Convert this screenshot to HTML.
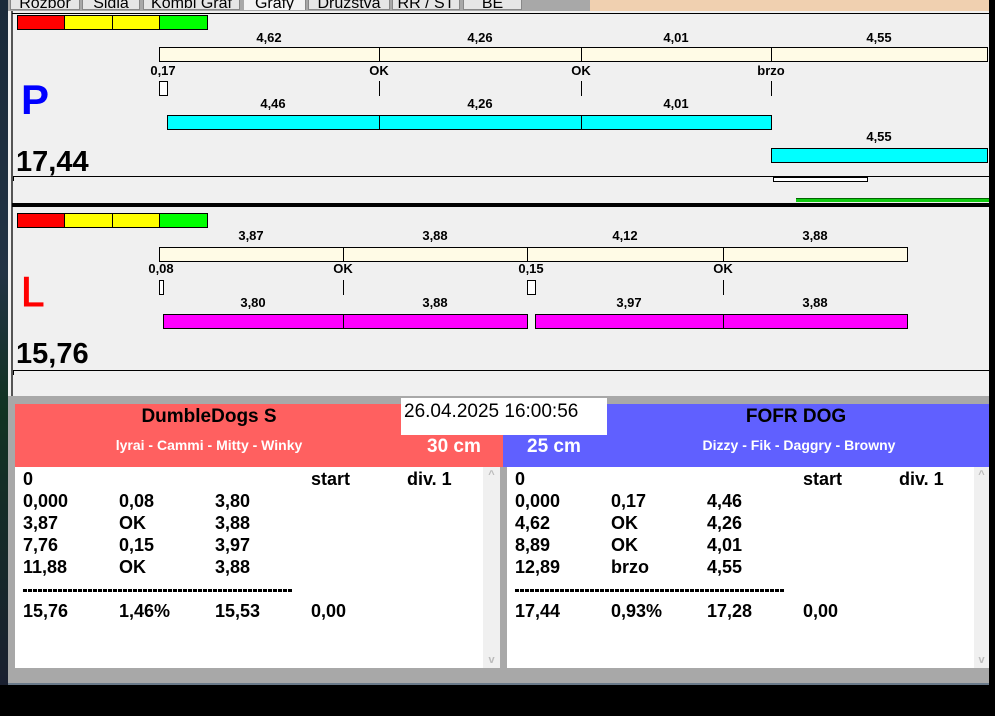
<!DOCTYPE html>
<html><head><meta charset="utf-8"><style>
*{margin:0;padding:0;box-sizing:border-box}
body{width:995px;height:716px;background:#000;position:relative;overflow:hidden;font-family:"Liberation Sans",Arial,sans-serif;font-weight:bold}
.a{position:absolute}
.t{position:absolute;font-size:13px;color:#000;transform:translateX(-50%);white-space:nowrap;line-height:14px}
.b{position:absolute;border:1px solid #000}
.v{position:absolute;width:1px;background:#000}
.r{position:absolute;font-size:18px;line-height:22px;color:#000}
.tab{position:absolute;top:0;height:10px;background:#e6e6e6;border:1px solid #888;border-top:0;overflow:hidden;font-size:16px;font-weight:normal;color:#000;text-align:center;line-height:8px}
.dash{position:absolute;height:3px;background:repeating-linear-gradient(90deg,#000 0 4px,transparent 4px 5px)}
</style></head><body>
<div class="a" style="left:0;top:0;width:8px;height:685px;background:linear-gradient(#1a2a3a,#223344 40%,#113322 60%,#1a2030)"></div>
<div class="a" style="left:8px;top:0;width:981px;height:685px;background:#f0f0f0"></div>
<div class="a" style="left:8px;top:0;width:981px;height:11px;background:#f0d0b0"></div>
<div class="a" style="left:8px;top:0;width:582px;height:11px;background:#a8a8a8"></div>
<div class="tab" style="left:10px;width:70px">Rozbor</div>
<div class="tab" style="left:82px;width:58px">Sidla</div>
<div class="tab" style="left:143px;width:97px">Kombi Graf</div>
<div class="tab" style="left:244px;width:62px;background:#f4f4f4;border-left:0;border-bottom:0">Grafy</div>
<div class="tab" style="left:308px;width:82px">Družstva</div>
<div class="tab" style="left:392px;width:68px">RR / ST</div>
<div class="tab" style="left:463px;width:59px">BE</div>
<div class="a" style="left:11px;top:11px;width:2px;height:385px;background:#555"></div>
<div class="a" style="left:12px;top:13px;width:977px;height:1px;background:#000"></div>

<div class="b" style="left:17px;top:15px;width:48px;height:15px;background:#f00"></div>
<div class="b" style="left:64px;top:15px;width:49px;height:15px;background:#ff0"></div>
<div class="b" style="left:112px;top:15px;width:48px;height:15px;background:#ff0"></div>
<div class="b" style="left:159px;top:15px;width:49px;height:15px;background:#0f0"></div>
<div class="t" style="left:269px;top:31px">4,62</div><div class="t" style="left:480px;top:31px">4,26</div><div class="t" style="left:676px;top:31px">4,01</div><div class="t" style="left:879px;top:31px">4,55</div>
<div class="b" style="left:159px;top:47px;width:829px;height:15px;background:#fffbe6"></div>
<div class="v" style="left:379px;top:47px;height:15px"></div><div class="v" style="left:581px;top:47px;height:15px"></div><div class="v" style="left:771px;top:47px;height:15px"></div>
<div class="t" style="left:163px;top:64px">0,17</div><div class="t" style="left:379px;top:64px">OK</div><div class="t" style="left:581px;top:64px">OK</div><div class="t" style="left:771px;top:64px">brzo</div>
<div class="b" style="left:159px;top:81px;width:9px;height:15px;background:#fff"></div>
<div class="v" style="left:379px;top:81px;height:15px"></div><div class="v" style="left:581px;top:81px;height:15px"></div><div class="v" style="left:771px;top:81px;height:15px"></div>
<div class="a" style="left:21px;top:76px;font-size:42px;color:#00f;line-height:48px">P</div>
<div class="t" style="left:273px;top:97px">4,46</div><div class="t" style="left:480px;top:97px">4,26</div><div class="t" style="left:676px;top:97px">4,01</div>
<div class="b" style="left:167px;top:115px;width:605px;height:15px;background:#0ff"></div>
<div class="v" style="left:379px;top:115px;height:15px"></div><div class="v" style="left:581px;top:115px;height:15px"></div>
<div class="t" style="left:879px;top:130px">4,55</div>
<div class="b" style="left:771px;top:148px;width:217px;height:15px;background:#0ff"></div>
<div class="a" style="left:16px;top:145px;font-size:29px;line-height:34px;color:#000">17,44</div>
<div class="a" style="left:13px;top:176px;width:977px;height:1px;background:#000"></div>
<div class="a" style="left:13px;top:176px;width:1px;height:5px;background:#000"></div>
<div class="b" style="left:773px;top:177px;width:95px;height:5px;background:#fff"></div>
<div class="a" style="left:796px;top:198px;width:193px;height:4px;background:#1c1;border-top:1px solid #060"></div>
<div class="a" style="left:12px;top:203px;width:977px;height:4px;background:#000"></div>

<div class="b" style="left:17px;top:213px;width:48px;height:15px;background:#f00"></div>
<div class="b" style="left:64px;top:213px;width:49px;height:15px;background:#ff0"></div>
<div class="b" style="left:112px;top:213px;width:48px;height:15px;background:#ff0"></div>
<div class="b" style="left:159px;top:213px;width:49px;height:15px;background:#0f0"></div>
<div class="t" style="left:251px;top:229px">3,87</div><div class="t" style="left:435px;top:229px">3,88</div><div class="t" style="left:625px;top:229px">4,12</div><div class="t" style="left:815px;top:229px">3,88</div>
<div class="b" style="left:159px;top:247px;width:749px;height:15px;background:#fffbe6"></div>
<div class="v" style="left:343px;top:247px;height:15px"></div><div class="v" style="left:527px;top:247px;height:15px"></div><div class="v" style="left:723px;top:247px;height:15px"></div>
<div class="t" style="left:161px;top:262px">0,08</div><div class="t" style="left:343px;top:262px">OK</div><div class="t" style="left:531px;top:262px">0,15</div><div class="t" style="left:723px;top:262px">OK</div>
<div class="b" style="left:159px;top:280px;width:5px;height:15px;background:#fff"></div>
<div class="b" style="left:527px;top:280px;width:9px;height:15px;background:#fff"></div>
<div class="v" style="left:343px;top:280px;height:15px"></div><div class="v" style="left:723px;top:280px;height:15px"></div>
<div class="a" style="left:21px;top:268px;font-size:42px;color:#f00;line-height:48px;font-weight:normal;-webkit-text-stroke:1px #f00">L</div>
<div class="t" style="left:253px;top:296px">3,80</div><div class="t" style="left:435px;top:296px">3,88</div><div class="t" style="left:629px;top:296px">3,97</div><div class="t" style="left:815px;top:296px">3,88</div>
<div class="b" style="left:163px;top:314px;width:365px;height:15px;background:#f0f"></div>
<div class="b" style="left:535px;top:314px;width:373px;height:15px;background:#f0f"></div>
<div class="v" style="left:343px;top:314px;height:15px"></div><div class="v" style="left:723px;top:314px;height:15px"></div>
<div class="a" style="left:16px;top:337px;font-size:29px;line-height:34px;color:#000">15,76</div>
<div class="a" style="left:13px;top:370px;width:977px;height:1px;background:#000"></div>
<div class="a" style="left:13px;top:370px;width:1px;height:5px;background:#000"></div>

<div class="a" style="left:8px;top:396px;width:981px;height:289px;background:#a8a8a8"></div>
<div class="a" style="left:15px;top:404px;width:488px;height:63px;background:#ff6060"></div>
<div class="a" style="left:503px;top:404px;width:486px;height:63px;background:#6060ff"></div>
<div class="a" style="left:401px;top:398px;width:206px;height:37px;background:#fff"></div>
<div class="a" style="left:404px;top:401px;font-size:19px;font-weight:normal;line-height:22px">26.04.2025 16:00:56</div>
<div class="t" style="left:209px;top:406px;font-size:19px;line-height:22px">DumbleDogs S</div>
<div class="t" style="left:796px;top:406px;font-size:19px;line-height:22px">FOFR DOG</div>
<div class="t" style="left:209px;top:437px;font-size:14px;color:#fff;line-height:16px">lyrai - Cammi - Mitty - Winky</div>
<div class="t" style="left:799px;top:437px;font-size:14px;color:#fff;line-height:16px">Dizzy - Fik - Daggry - Browny</div>
<div class="a" style="left:427px;top:436px;font-size:19px;color:#fff;line-height:22px">30 cm</div>
<div class="a" style="left:527px;top:436px;font-size:19px;color:#fff;line-height:22px">25 cm</div>

<div class="a" style="left:15px;top:467px;width:485px;height:201px;background:#fff"></div>
<div class="a" style="left:483px;top:467px;width:17px;height:201px;background:#f0f0f0;color:#bbb;font-size:11px;text-align:center;padding-top:2px">^<div style="position:absolute;bottom:2px;width:17px">v</div></div>
<div class="a" style="left:507px;top:467px;width:482px;height:201px;background:#fff"></div>
<div class="a" style="left:974px;top:467px;width:15px;height:201px;background:#f0f0f0;color:#bbb;font-size:11px;text-align:center;padding-top:2px">^<div style="position:absolute;bottom:2px;width:15px">v</div></div>

<div class="r" style="left:23px;top:468px">0</div><div class="r" style="left:311px;top:468px">start</div><div class="r" style="left:407px;top:468px">div. 1</div>
<div class="r" style="left:23px;top:490px">0,000</div><div class="r" style="left:119px;top:490px">0,08</div><div class="r" style="left:215px;top:490px">3,80</div>
<div class="r" style="left:23px;top:512px">3,87</div><div class="r" style="left:119px;top:512px">OK</div><div class="r" style="left:215px;top:512px">3,88</div>
<div class="r" style="left:23px;top:534px">7,76</div><div class="r" style="left:119px;top:534px">0,15</div><div class="r" style="left:215px;top:534px">3,97</div>
<div class="r" style="left:23px;top:556px">11,88</div><div class="r" style="left:119px;top:556px">OK</div><div class="r" style="left:215px;top:556px">3,88</div>
<div class="dash" style="left:23px;top:589px;width:270px"></div>
<div class="r" style="left:23px;top:600px">15,76</div><div class="r" style="left:119px;top:600px">1,46%</div><div class="r" style="left:215px;top:600px">15,53</div><div class="r" style="left:311px;top:600px">0,00</div>

<div class="r" style="left:515px;top:468px">0</div><div class="r" style="left:803px;top:468px">start</div><div class="r" style="left:899px;top:468px">div. 1</div>
<div class="r" style="left:515px;top:490px">0,000</div><div class="r" style="left:611px;top:490px">0,17</div><div class="r" style="left:707px;top:490px">4,46</div>
<div class="r" style="left:515px;top:512px">4,62</div><div class="r" style="left:611px;top:512px">OK</div><div class="r" style="left:707px;top:512px">4,26</div>
<div class="r" style="left:515px;top:534px">8,89</div><div class="r" style="left:611px;top:534px">OK</div><div class="r" style="left:707px;top:534px">4,01</div>
<div class="r" style="left:515px;top:556px">12,89</div><div class="r" style="left:611px;top:556px">brzo</div><div class="r" style="left:707px;top:556px">4,55</div>
<div class="dash" style="left:515px;top:589px;width:270px"></div>
<div class="r" style="left:515px;top:600px">17,44</div><div class="r" style="left:611px;top:600px">0,93%</div><div class="r" style="left:707px;top:600px">17,28</div><div class="r" style="left:803px;top:600px">0,00</div>
<div class="a" style="left:8px;top:683px;width:981px;height:2px;background:#6a7a8a"></div>
</body></html>
